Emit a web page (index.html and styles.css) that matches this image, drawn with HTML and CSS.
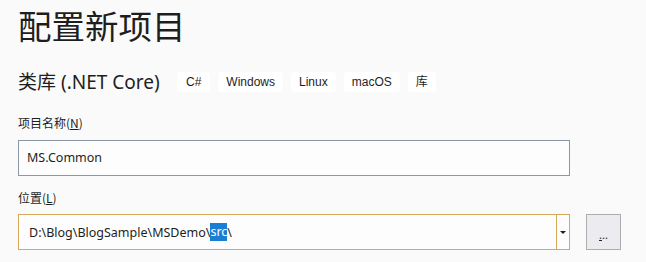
FILE: index.html
```html
<!DOCTYPE html>
<html lang="zh">
<head>
<meta charset="utf-8">
<link rel="stylesheet" href="styles.css">
</head>
<body>
<div class="page">
  <h1 class="title">配置新项目</h1>
  <div class="subtitle-row">
    <span class="subtitle">类库 (.NET Core)</span>
    <div class="tags">
      <span class="tag">C#</span>
      <span class="tag">Windows</span>
      <span class="tag">Linux</span>
      <span class="tag">macOS</span>
      <span class="tag">库</span>
    </div>
  </div>
  <div class="field">
    <label class="label">项目名称(<u>N</u>)</label>
    <div class="input name-input">MS.Common</div>
  </div>
  <div class="field">
    <label class="label">位置(<u>L</u>)</label>
    <div class="location-row">
      <div class="combo">
        <div class="combo-text">D:\Blog\BlogSample\MSDemo\<span class="sel">src</span>\</div>
        <div class="combo-arrow"><span class="caret"></span></div>
      </div>
      <button class="browse"><u>.</u>..</button>
    </div>
  </div>
</div>
</body>
</html>
```
FILE: styles.css
```css
html, body {
  margin: 0;
  padding: 0;
  background: #fafafa;
}
body {
  font-family: "Noto Sans", "Noto Sans CJK SC", sans-serif;
  color: #1e1e1e;
}
.page {
  padding: 0 0 0 18px;
}
.title {
  margin: 0;
  padding-top: 2px;
  font-family: "Noto Sans CJK SC", sans-serif;
  font-weight: 400;
  font-size: 33.5px;
  line-height: 46px;
  height: 69px;
}
.subtitle-row {
  display: flex;
  align-items: center;
  height: 20px;
  margin-top: 1px;
}
.subtitle {
  font-family: "Noto Sans", "Noto Sans CJK SC", sans-serif;
  font-size: 19px;
  line-height: 20px;
  width: 159px;
  white-space: nowrap;
}
.tags {
  display: flex;
  gap: 8px;
}
.tag {
  background: #ffffff;
  border-radius: 4px;
  height: 20px;
  line-height: 20px;
  padding: 0 8px;
  font-size: 12px;
  font-family: "Liberation Sans", "Noto Sans CJK SC", sans-serif;
}
.tag:first-child {
  padding: 0 9px;
}
.label {
  display: block;
  font-family: "Noto Sans CJK SC", sans-serif;
  font-size: 12px;
  line-height: 16px;
  padding-top: 23px;
  height: 16px;
  margin-bottom: 9px;
}
.label u {
  text-underline-offset: 1px;
}
.input {
  box-sizing: border-box;
  width: 552px;
  height: 36px;
  border: 1px solid #8a97a6;
  background: #fdfdfd;
  padding: 0 0 0 8px;
  line-height: 34px;
  font-size: 12.5px;
  font-family: "Noto Sans", sans-serif;
}
.field + .field .label {
  padding-top: 14px;
  margin-bottom: 8px;
}
.location-row {
  display: flex;
  align-items: flex-start;
}
.combo {
  box-sizing: border-box;
  width: 552px;
  height: 36px;
  border: 1px solid #d6a85c;
  background: #fdfdfd;
  display: flex;
}
.combo-text {
  flex: 1;
  padding-left: 10px;
  font-size: 12.5px;
  font-family: "Noto Sans", sans-serif;
  border-right: 1px solid #d6a85c;
  white-space: nowrap;
  display: flex;
  align-items: center;
}
.sel {
  display: inline-block;
  background: #1a7fd4;
  color: #ffffff;
  line-height: 18px;
  height: 18px;
}
.combo-arrow {
  width: 12px;
  display: flex;
  align-items: center;
  justify-content: center;
}
.caret {
  width: 0;
  height: 0;
  border-left: 3px solid transparent;
  border-right: 3px solid transparent;
  border-top: 3px solid #1e1e1e;
}
.browse {
  box-sizing: border-box;
  margin-left: 16px;
  width: 35px;
  height: 36px;
  border: 1px solid #adadad;
  background: #ecebf0;
  padding: 4px 0 0 0;
  font-size: 11px;
  color: #1e1e1e;
  font-family: "Noto Sans", sans-serif;
}
```
